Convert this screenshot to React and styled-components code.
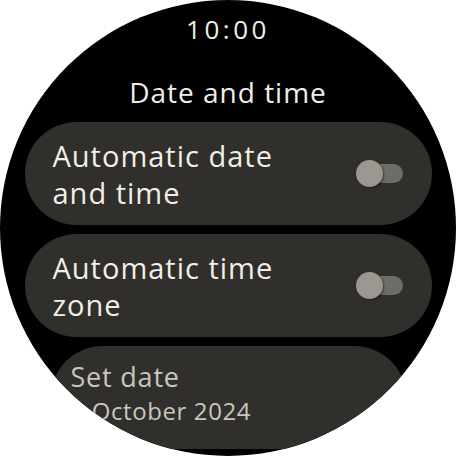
import styled, { createGlobalStyle } from "styled-components";

const GlobalStyle = createGlobalStyle`
  html, body {
    margin: 0;
    padding: 0;
    background: #ffffff;
  }
  body {
    font-family: "Open Sans", Roboto, sans-serif;
  }
`;

const Watch = styled.div`
  width: 456px;
  height: 456px;
  border-radius: 50%;
  overflow: hidden;
  background: #000000;
  display: flex;
  flex-direction: column;
  align-items: center;
`;

const Clock = styled.div`
  margin-top: 10px;
  height: 38px;
  line-height: 38px;
  font-size: 26px;
  letter-spacing: 3.5px;
  color: #f2eee6;
`;

const Title = styled.h1`
  margin: 26px 0 0;
  height: 36px;
  line-height: 36px;
  font-size: 28px;
  font-weight: 400;
  letter-spacing: 1px;
  color: #f2eee6;
`;

const List = styled.div`
  margin-top: 12px;
  display: flex;
  flex-direction: column;
  align-items: center;
  gap: 9px;
`;

const Card = styled.div`
  box-sizing: border-box;
  width: ${(p) => (p.$narrow ? "355px" : "407px")};
  height: 103px;
  border-radius: 52px;
  background: #302f2b;
  padding: ${(p) => (p.$narrow ? "14px 20px" : "0 29px 0 28px")};
  display: flex;
  align-items: ${(p) => (p.$narrow ? "flex-start" : "center")};
  justify-content: space-between;
  flex-shrink: 0;
`;

const Label = styled.div`
  font-size: 29px;
  line-height: 37px;
  letter-spacing: 1px;
  color: #f2eee6;
`;

const TextStack = styled.div`
  display: flex;
  flex-direction: column;
  color: #c9c6be;
`;

const Primary = styled.div`
  font-size: 27px;
  line-height: 34px;
  letter-spacing: 0.8px;
`;

const Secondary = styled.div`
  font-size: 24px;
  line-height: 34px;
  letter-spacing: 0.6px;
`;

const Track = styled.div`
  position: relative;
  width: 47px;
  height: 27px;
  flex-shrink: 0;

  &::before {
    content: "";
    position: absolute;
    left: 10px;
    right: 0;
    top: 4px;
    height: 19px;
    border-radius: 10px;
    background: #6e6c67;
  }
`;

const Thumb = styled.div`
  position: absolute;
  left: 0;
  top: 0;
  width: 27px;
  height: 27px;
  border-radius: 50%;
  background: #9a9891;
  box-shadow: 1px 1px 2px rgba(0, 0, 0, 0.45);
`;

function Toggle() {
  return (
    <Track>
      <Thumb />
    </Track>
  );
}

export default function App() {
  return (
    <>
      <GlobalStyle />
      <Watch>
        <Clock>10:00</Clock>
        <Title>Date and time</Title>
        <List>
          <Card>
            <Label>
              Automatic date
              <br />
              and time
            </Label>
            <Toggle />
          </Card>
          <Card>
            <Label>
              Automatic time
              <br />
              zone
            </Label>
            <Toggle />
          </Card>
          <Card $narrow>
            <TextStack>
              <Primary>Set date</Primary>
              <Secondary>1 October 2024</Secondary>
            </TextStack>
          </Card>
        </List>
      </Watch>
    </>
  );
}
